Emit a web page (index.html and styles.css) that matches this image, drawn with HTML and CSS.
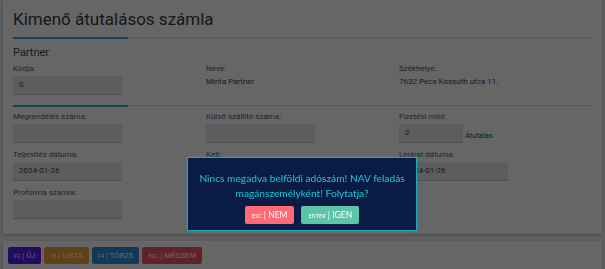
FILE: index.html
```html
<!DOCTYPE html>
<html lang="hu">
<head>
  <meta charset="UTF-8">
  <meta name="viewport" content="width=device-width, initial-scale=1.0">
  <title>Kimenő átutalásos számla</title>
  <link rel="stylesheet" href="styles.css">
</head>
<body>
  <div class="card main">
    <h1 class="title">Kimenő átutalásos számla</h1>
    <div class="divider"></div>
    <h2 class="section">Partner</h2>
    <div class="grid">
      <div class="field">
        <label>Kódja:</label>
        <div class="input">0</div>
      </div>
      <div class="field">
        <label>Neve:</label>
        <div class="value">Minta Partner</div>
      </div>
      <div class="field">
        <label>Székhelye:</label>
        <div class="value">7632 Pécs Kossuth utca 11.</div>
      </div>
    </div>
    <div class="divider lower"></div>
    <div class="grid">
      <div class="field">
        <label>Megrendelés száma:</label>
        <div class="input"></div>
      </div>
      <div class="field">
        <label>Külső szállító száma:</label>
        <div class="input"></div>
      </div>
      <div class="field">
        <label>Fizetési mód:</label>
        <div class="inline">
          <div class="input short">2</div>
          <span class="hint">Átutalás</span>
        </div>
      </div>
      <div class="field">
        <label>Teljesítés dátuma:</label>
        <div class="input">2024-01-26</div>
      </div>
      <div class="field">
        <label>Kelt:</label>
        <div class="input"></div>
      </div>
      <div class="field">
        <label>Lejárat dátuma:</label>
        <div class="input">2024-01-26</div>
      </div>
      <div class="field">
        <label>Proforma számla:</label>
        <div class="input"></div>
      </div>
    </div>
  </div>

  <div class="card footer">
    <button class="btn purple"><small>F2</small> | ÚJ</button>
    <button class="btn orange"><small>F3</small> | LISTA</button>
    <button class="btn blue"><small>F4</small> | TÖRZS</button>
    <button class="btn red"><small>ESC</small> | MÉGSEM</button>
  </div>

  <div class="overlay"></div>

  <div class="modal">
    <p class="modal-text">Nincs megadva belföldi adószám! NAV feladás magánszemélyként! Folytatja?</p>
    <div class="modal-actions">
      <button class="mbtn no"><small>ESC</small> | NEM</button>
      <button class="mbtn yes"><small>ENTER</small> | IGEN</button>
    </div>
  </div>
</body>
</html>
```

FILE: styles.css
```css
body {
  margin: 0;
  background: #efefef;
  font-family: Roboto, "Liberation Sans", sans-serif;
  color: #444;
}
.card {
  background: #fff;
  margin: 0 3px;
  box-shadow: 0 1px 3px rgba(0, 0, 0, 0.25);
}
.main {
  padding: 0 10px 9px;
}
.title {
  margin: 0;
  padding-top: 8px;
  padding-bottom: 7px;
  font-size: 17px;
  line-height: 22px;
  font-weight: 400;
  color: #3a3a3a;
}
.divider {
  height: 2px;
  background:
    linear-gradient(#2aaec2, #2aaec2) 0 0 / 115px 2px no-repeat,
    linear-gradient(#d8d8d8, #d8d8d8) 0 0 / 100% 1px no-repeat;
}
.divider.lower {
  margin-top: 4px;
  margin-bottom: 4px;
}
.section {
  margin: 7px 0 3px;
  font-size: 11px;
  line-height: 14px;
  font-weight: 400;
  color: #444;
}
.grid {
  display: grid;
  grid-template-columns: repeat(3, 1fr);
}
.field {
  display: flex;
  flex-direction: column;
  margin-bottom: 6px;
}
.field label {
  font-size: 8px;
  line-height: 11px;
  color: #5a5a5a;
  margin-bottom: 2px;
}
.input {
  width: 109px;
  height: 19px;
  box-sizing: border-box;
  background: #e8e8e8;
  border-bottom: 1px solid #c4c4c4;
  padding: 0 6px;
  font-size: 8px;
  line-height: 18px;
  color: #444;
}
.input.short {
  width: 64px;
}
.inline {
  display: flex;
  align-items: flex-end;
  gap: 2px;
}
.hint {
  font-size: 7.5px;
  line-height: 11px;
  color: #444;
  padding-bottom: 2px;
}
.value {
  font-size: 8px;
  line-height: 11px;
  color: #444;
}
.footer {
  margin-top: 7px;
  padding: 6px 5px 12px;
  display: flex;
  gap: 3px;
}
.btn {
  border: none;
  border-radius: 2px;
  height: 17px;
  padding: 0 6px;
  color: #fff;
  font-family: Roboto, "Liberation Sans", sans-serif;
  font-size: 7.5px;
  letter-spacing: 0.1px;
  cursor: pointer;
}
.btn small {
  font-size: 5.5px;
}
.purple { background: #5a1af0; }
.orange { background: #f0a03c; }
.blue { background: #2f8fd8; }
.red { background: #f25468; }
.overlay {
  position: fixed;
  inset: 0;
  background: rgba(0, 0, 0, 0.6);
}
.modal {
  position: fixed;
  top: 157px;
  left: 187px;
  width: 230px;
  height: 74px;
  box-sizing: border-box;
  background: #0b1c44;
  border: 1px solid #1fa7b8;
  box-shadow: 0 0 3px rgba(31, 167, 184, 0.5);
  text-align: center;
  font-family: Lato, "Open Sans", sans-serif;
}
.modal-text {
  margin: 13px 0 0;
  font-size: 10.2px;
  line-height: 14.5px;
  color: #1fc6d6;
}
.modal-actions {
  display: flex;
  justify-content: center;
  gap: 7px;
  margin-top: 6px;
}
.mbtn {
  border: none;
  border-radius: 2px;
  height: 18px;
  padding: 0 7px;
  color: #fff;
  font-family: Lato, "Open Sans", sans-serif;
  font-size: 8.5px;
  cursor: pointer;
}
.mbtn small {
  font-size: 5.5px;
}
.no { background: #ff6a76; }
.yes { background: #5ec4a9; }
```
